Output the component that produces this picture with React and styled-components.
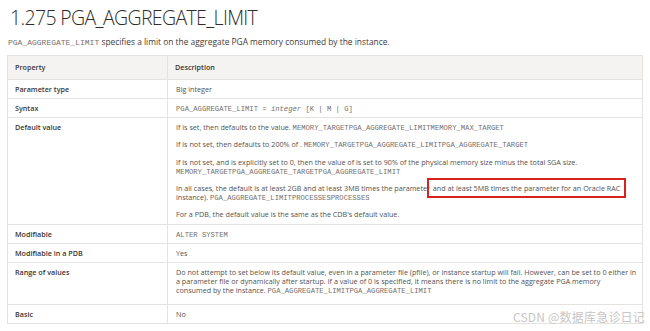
import React from "react";
import styled, { createGlobalStyle } from "styled-components";

const GlobalStyle = createGlobalStyle`
  html, body {
    margin: 0;
    padding: 0;
    background: #ffffff;
  }
  body {
    font-family: "Open Sans", "Noto Sans", sans-serif;
    color: #3f3b38;
  }
`;

const rows = [
  { label: "Parameter type", kind: "text", value: "Big integer" },
  { label: "Syntax", kind: "syntax" },
  { label: "Default value", kind: "default" },
  { label: "Modifiable", kind: "code", value: "ALTER SYSTEM" },
  { label: "Modifiable in a PDB", kind: "text", value: "Yes" },
  { label: "Range of values", kind: "range", padBottom: 9 },
  { label: "Basic", kind: "text", value: "No" },
];

function Description({ kind, value }) {
  if (kind === "code") return <Code>{value}</Code>;
  if (kind === "syntax")
    return (
      <Code>
        PGA_AGGREGATE_LIMIT = <i>integer</i> [K | M | G]
      </Code>
    );
  if (kind === "default")
    return (
      <>
        <Para>
          If is set, then defaults to the value. <Code>MEMORY_TARGETPGA_AGGREGATE_LIMITMEMORY_MAX_TARGET</Code>
        </Para>
        <Para>
          If is not set, then defaults to 200% of . <Code>MEMORY_TARGETPGA_AGGREGATE_LIMITPGA_AGGREGATE_TARGET</Code>
        </Para>
        <Para>
          If is not set, and is explicitly set to 0, then the value of is set to 90% of the physical memory size minus the total SGA size.
          <br />
          <Code>MEMORY_TARGETPGA_AGGREGATE_TARGETPGA_AGGREGATE_LIMIT</Code>
        </Para>
        <Para>
          In all cases, the default is at least 2GB and at least 3MB times the parameter{" "}
          <Marked>and at least 5MB times the parameter for an Oracle RAC</Marked>
          <br />
          instance). <Code>PGA_AGGREGATE_LIMITPROCESSESPROCESSES</Code>
        </Para>
        <Para>For a PDB, the default value is the same as the CDB's default value.</Para>
      </>
    );
  if (kind === "range")
    return (
      <>
        Do not attempt to set below its default value, even in a parameter file (pfile), or instance startup will fail. However, can be set to 0 either in
        <br />
        a parameter file or dynamically after startup. If a value of 0 is specified, it means there is no limit to the aggregate PGA memory
        <br />
        consumed by the instance. <Code>PGA_AGGREGATE_LIMITPGA_AGGREGATE_LIMIT</Code>
      </>
    );
  return value;
}

export default function App() {
  return (
    <Page>
      <GlobalStyle />
      <Title>1.275 PGA_AGGREGATE_LIMIT</Title>
      <Intro>
        <IntroCode>PGA_AGGREGATE_LIMIT</IntroCode> specifies a limit on the aggregate PGA memory consumed by the instance.
      </Intro>
      <Table>
        <thead>
          <tr>
            <Head>Property</Head>
            <Head>Description</Head>
          </tr>
        </thead>
        <tbody>
          {rows.map((r) => (
            <tr key={r.label}>
              <Label>{r.label}</Label>
              <Cell $padBottom={r.padBottom}>
                <Description kind={r.kind} value={r.value} />
              </Cell>
            </tr>
          ))}
        </tbody>
      </Table>
      <Watermark>CSDN @数据库急诊日记</Watermark>
    </Page>
  );
}

const Page = styled.div`
  position: relative;
  width: 650px;
  height: 331px;
  overflow: hidden;
  padding: 7px 0 0 7px;
  box-sizing: border-box;
`;

const Title = styled.h1`
  margin: 0 0 0 3px;
  font-size: 19.5px;
  line-height: 22px;
  font-weight: 300;
  color: #2f2c2a;
  letter-spacing: -0.65px;
`;

const Intro = styled.p`
  margin: 7px 0 0 1px;
  font-size: 8.4px;
  line-height: 11px;
  color: #3f3b38;
`;

const IntroCode = styled.span`
  font-family: "Liberation Mono", "DejaVu Sans Mono", monospace;
  font-size: 8px;
  line-height: 1;
  color: #75706d;
`;

const Table = styled.table`
  margin-top: 8px;
  width: 636px;
  border-collapse: collapse;
  border: 1px solid #e6e2df;
  font-size: 7.2px;
  line-height: 9px;
  table-layout: fixed;

  td, th {
    border: 1px solid #e6e2df;
    text-align: left;
    vertical-align: top;
  }

  td:first-child, th:first-child {
    width: 145px;
  }
`;

const Head = styled.th`
  background: #f5f3f1;
  font-weight: 600;
  color: #3a3633;
  padding: 7px 7px 7px;
`;

const Label = styled.td`
  font-weight: 600;
  color: #3a3633;
  padding: 5px 7px 4px;
`;

const Cell = styled.td`
  color: #57524e;
  white-space: nowrap;
  padding: 5px 4px ${(p) => p.$padBottom || 4}px 8px;
`;

const Para = styled.p`
  margin: 0 0 8px;
  &:last-child {
    margin-bottom: 1px;
  }
`;

const Code = styled.span`
  font-family: "Liberation Mono", "DejaVu Sans Mono", monospace;
  font-size: 7.2px;
  line-height: 1;
  color: #75706d;

  i {
    font-style: italic;
  }
`;

const Marked = styled.span`
  outline: 2px solid #d8211d;
  outline-offset: 3px;
  padding: 0 1px;
`;

const Watermark = styled.div`
  position: absolute;
  right: 5px;
  bottom: 6px;
  font-family: "Noto Sans CJK SC", "Noto Sans", sans-serif;
  font-size: 12px;
  color: #c9c6c4;
  letter-spacing: 0.2px;
`;
